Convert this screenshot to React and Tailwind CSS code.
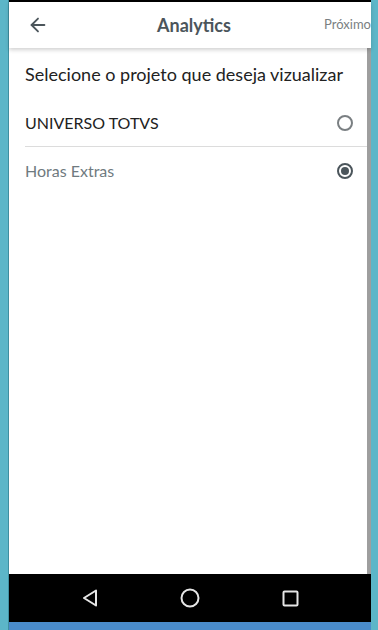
import { ArrowLeft } from 'lucide-react';

const projects = [
  { name: 'UNIVERSO TOTVS', selected: false },
  { name: 'Horas Extras', selected: true },
];

const Radio = ({ checked }) => (
  <span
    className={`flex h-[16px] w-[16px] items-center justify-center rounded-full border-2 ${
      checked ? 'border-[#4b555b]' : 'border-[#7a7f82]'
    }`}
  >
    {checked && <span className="h-[8px] w-[8px] rounded-full bg-[#4b555b]" />}
  </span>
);

export default function App() {
  return (
    <div className="flex h-[630px] w-[378px] bg-[#5cb6c8] font-['Lato',sans-serif]">
      <div className="w-[9px] border-r border-[#3f8fa0]" />
      <div className="flex w-[362px] flex-col bg-white">
        <div className="h-[2px] bg-black" />
        <header className="relative z-10 flex h-[46px] items-center justify-between bg-white shadow-[0_2px_4px_rgba(0,0,0,0.18)]">
          <ArrowLeft className="ml-[18px] h-[22px] w-[22px] text-[#4b555b]" strokeWidth={2} />
          <h1 className="absolute left-[calc(50%+4px)] -translate-x-1/2 text-[18px] font-bold text-[#4b555b]">Analytics</h1>
          <span className="text-[13px] text-[#7a7f82]">Próximo</span>
        </header>
        <main className="flex flex-1 border-r-[4px] border-[#9e9e9e]">
          <div className="flex-1 pl-[16px] pt-[14px]">
            <p className="text-[18px] leading-[24px] text-[#222]">Selecione o projeto que deseja vizualizar</p>
            <ul className="mt-[13px]">
              {projects.map((p, i) => (
                <li
                  key={p.name}
                  className={`flex h-[48px] items-center justify-between pr-[14px] ${
                    i === 0 ? 'border-b border-[#dcdcdc]' : ''
                  }`}
                >
                  <span className={`text-[16px] ${p.selected ? 'text-[#6f7a80]' : 'text-[#222]'}`}>{p.name}</span>
                  <Radio checked={p.selected} />
                </li>
              ))}
            </ul>
          </div>
        </main>
        <nav className="flex h-[48px] items-center justify-center bg-black text-[#e6e6e6]">
          <div className="flex w-[100px] justify-center">
            <svg width="16" height="18" viewBox="0 0 16 18" fill="none" stroke="currentColor" strokeWidth="2" strokeLinejoin="round">
              <path d="M14 1.5 L2 9 L14 16.5 Z" />
            </svg>
          </div>
          <div className="flex w-[100px] justify-center">
            <svg width="20" height="20" viewBox="0 0 20 20" fill="none" stroke="currentColor" strokeWidth="2">
              <circle cx="10" cy="10" r="8.5" />
            </svg>
          </div>
          <div className="flex w-[100px] justify-center">
            <svg width="17" height="17" viewBox="0 0 17 17" fill="none" stroke="currentColor" strokeWidth="2">
              <rect x="1.5" y="1.5" width="14" height="14" rx="1" />
            </svg>
          </div>
        </nav>
        <div className="h-[8px] bg-[#4a8ccb]" />
      </div>
      <div className="flex-1" />
    </div>
  );
}
